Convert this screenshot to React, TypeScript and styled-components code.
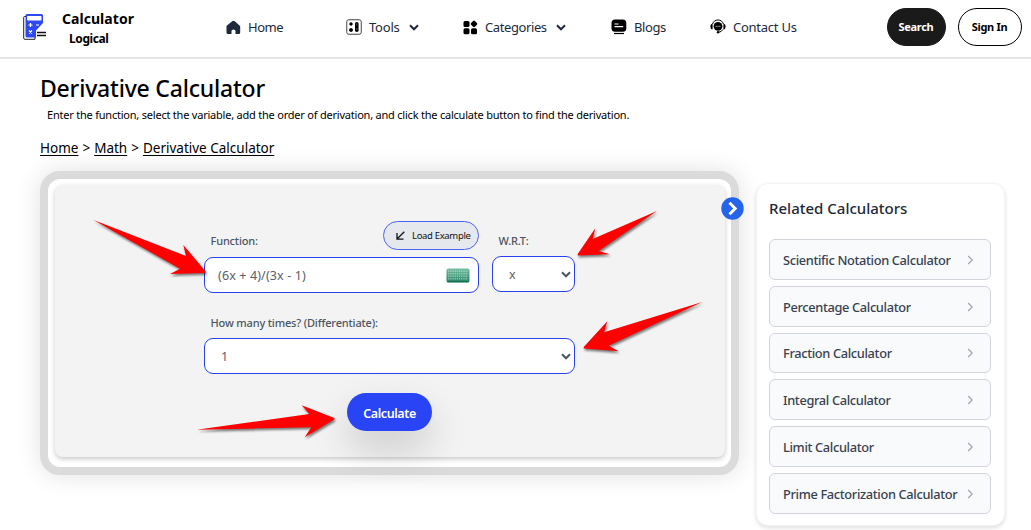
import React from "react";
import styled, { createGlobalStyle } from "styled-components";

const GlobalStyle = createGlobalStyle`
  *, *::before, *::after { box-sizing: border-box; }
  body {
    margin: 0;
    background: #fff;
    color: #000;
    font-family: "Noto Sans", "Open Sans", sans-serif;
    overflow: hidden;
  }
  svg { display: block; flex: none; }
  button, select { font-family: inherit; }
`;

const Page = styled.div`
  position: relative;
  width: 1031px;
  height: 530px;
  overflow: hidden;
`;

const Header = styled.header`
  display: flex;
  align-items: flex-start;
  height: 59px;
  padding-left: 23px;
  border-bottom: 2px solid #e5e5e5;
`;

const Brand = styled.div`
  display: flex;
  width: 203px;
  padding-top: 10px;
  gap: 15px;
`;

const BrandText = styled.div`
  display: flex;
  flex-direction: column;
  font-weight: 700;
`;

const BrandName = styled.span`
  font-size: 14px;
  line-height: 18px;
  letter-spacing: 0.05px;
`;

const BrandSub = styled.span`
  margin-left: 7px;
  font-size: 12px;
  line-height: 21px;
  letter-spacing: -0.4px;
`;

const Nav = styled.nav`
  display: flex;
  align-items: center;
  height: 54px;
`;

const NavItem = styled.a<{ $width: number; $spacing?: number }>`
  display: flex;
  align-items: center;
  width: ${(p) => p.$width}px;
  font-size: 13px;
  line-height: 20px;
  letter-spacing: ${(p) => p.$spacing ?? 0}px;
  color: #1e293b;
  white-space: nowrap;
`;

const NavLabel = styled.span`
  margin-left: 7px;
  margin-right: 9px;
`;

const HeaderActions = styled.div`
  display: flex;
  gap: 12px;
  padding-top: 8px;
`;

const PillButton = styled.button<{ $dark?: boolean; $width: number }>`
  width: ${(p) => p.$width}px;
  height: 38px;
  padding: 0 1px 1px 0;
  border: 1px solid ${(p) => (p.$dark ? "#1a1a1a" : "#000")};
  border-radius: 19px;
  background: ${(p) => (p.$dark ? "#1a1a1a" : "#fff")};
  color: ${(p) => (p.$dark ? "#fff" : "#000")};
  font-size: 11px;
  font-weight: 700;
  letter-spacing: -0.3px;
`;

const Main = styled.main`
  display: flex;
  align-items: flex-start;
  gap: 17px;
  padding: 15px 0 0 40px;
`;

const Content = styled.section`
  width: 699px;
`;

const Title = styled.h1`
  margin: 0;
  font-size: 23px;
  line-height: 28px;
  font-weight: 500;
  letter-spacing: -0.2px;
  white-space: nowrap;
`;

const Intro = styled.p`
  margin: 5px 0 0 7px;
  font-size: 11px;
  line-height: 16px;
  letter-spacing: -0.216px;
  white-space: nowrap;
`;

const Breadcrumb = styled.div`
  display: flex;
  gap: 4px;
  margin-top: 15px;
  font-size: 13.5px;
  line-height: 20px;
  white-space: nowrap;
`;

const Crumb = styled.a`
  text-decoration: underline;
  text-underline-offset: 2px;
`;

const Frame = styled.div`
  position: relative;
  height: 304px;
  margin-top: 13px;
  padding: 6px 6px 10px 7px;
  border: 8px solid #dbdbdb;
  border-radius: 20px;
  background: #fff;
  box-shadow: 0 0 24px rgba(0, 0, 0, 0.12);
`;

const Panel = styled.form`
  display: flex;
  flex-direction: column;
  width: 670px;
  height: 272px;
  padding: 36px 0 0 149px;
  border-radius: 8px;
  background: #f3f3f3;
  box-shadow: 0 2px 5px rgba(0, 0, 0, 0.22);
`;

const FieldRow = styled.div`
  display: flex;
  gap: 13px;
`;

const Field = styled.div<{ $width: number }>`
  display: flex;
  flex-direction: column;
  width: ${(p) => p.$width}px;
`;

const LabelRow = styled.div<{ $height: number }>`
  display: flex;
  justify-content: space-between;
  height: ${(p) => p.$height}px;
  padding-left: 6.5px;
`;

const Label = styled.label<{ $top: number }>`
  margin-top: ${(p) => p.$top}px;
  font-size: 11px;
  line-height: 16px;
  font-weight: 500;
  letter-spacing: -0.16px;
  color: #4b5563;
  white-space: nowrap;
`;

const LoadButton = styled.button`
  display: flex;
  align-items: center;
  gap: 7px;
  width: 96px;
  height: 29px;
  padding: 0 0 0 12px;
  border: 1px solid #4a63f5;
  border-radius: 15px;
  background: #e5e9ee;
  color: #111;
  font-size: 9.5px;
  letter-spacing: -0.33px;
  white-space: nowrap;
`;

const Control = styled.div<{ $indent: number; $end: number }>`
  display: flex;
  align-items: center;
  justify-content: space-between;
  height: 36px;
  padding: 1px ${(p) => p.$end}px 0 ${(p) => p.$indent}px;
  border: 1px solid #2740f0;
  border-radius: 9px;
  background: #fff;
  color: #5b6068;
  font-size: 12.5px;
  line-height: 18px;
  letter-spacing: 0.13px;

  svg { margin-top: -1px; }
`;

const CalculateButton = styled.button`
  width: 85px;
  height: 38px;
  margin: 19px 0 0 143px;
  padding: 2px 0 0;
  border: 0;
  border-radius: 19px;
  background: #2944f5;
  color: #fff;
  font-size: 12.5px;
  font-weight: 600;
  letter-spacing: -0.4px;
  box-shadow: 0 18px 38px rgba(0, 0, 0, 0.17);
`;

const NextBadge = styled.span`
  position: absolute;
  top: 18px;
  right: -13px;
`;

const Sidebar = styled.aside`
  display: flex;
  flex-direction: column;
  width: 249px;
  height: 343px;
  margin-top: 109px;
  padding: 14px 13px 0 12px;
  border: 1px solid #f3f4f6;
  border-radius: 12px;
  background: #fff;
  box-shadow: 0 2px 4px rgba(0, 0, 0, 0.13);
`;

const SidebarTitle = styled.h2`
  margin: 0 0 20px;
  font-size: 15px;
  line-height: 21px;
  font-weight: 500;
  color: #1f2937;
`;

const LinkList = styled.div`
  display: flex;
  flex-direction: column;
  gap: 6px;
`;

const LinkCard = styled.a`
  display: flex;
  align-items: center;
  justify-content: space-between;
  height: 40.8px;
  padding: 1px 16px 0 13px;
  border: 1px solid #d1d5db;
  border-radius: 6px;
  background: #f9fafb;
  color: #374151;
  font-size: 12.8px;
  line-height: 20px;
  font-weight: 500;
  letter-spacing: -0.34px;
  white-space: nowrap;
`;

const Annotations = styled.svg`
  position: absolute;
  top: 0;
  left: 0;
  pointer-events: none;
  filter: drop-shadow(1px 2px 1px rgba(0, 0, 0, 0.5));
`;

const LogoIcon = () => (
  <svg width="24" height="32" viewBox="0 0 24 32">
    <path d="M3 6.500H1.500Q.7 6.500.7 7.500V28Q.7 29.300 2 29.300H12V27" fill="none" stroke="#222" strokeWidth="1" />
    <path d="M2.500 5.500Q2.500 4 4 4H18.500Q20 4 20 5.500V13L13 20.500V27.500H4Q2.500 27.500 2.500 26Z" fill="#2f49f2" />
    <rect x="4" y="6" width="14.500" height="4.500" rx=".8" fill="#fff" />
    <path d="M5.500 15h4M7.500 13v4M13 15h3M6 20.500l3 3m0-3l-3 3" stroke="#fff" strokeWidth="1.200" />
    <path d="M14 22.500h9M14 25.500h9" stroke="#111" strokeWidth="1.300" />
  </svg>
);

const HomeIcon = () => (
  <svg width="15" height="15" viewBox="0 0 15 15">
    <path d="M1 5.500L6.200 1.300Q7.500.4 8.800 1.300L13.500 5.500Q14.200 6 14.200 6.800V12.500Q14.200 14 12.700 14H9.500V11Q9.500 9.500 7.500 9.500T5.500 11V14H2Q.5 14 .5 12.500V6.800Q.5 6 1 5.500Z" fill="#1e293b" />
  </svg>
);

const ToolsIcon = () => (
  <svg width="16" height="16" viewBox="0 0 16 16">
    <rect x=".75" y=".75" width="14.500" height="14.500" rx="2" fill="#fff" stroke="#444" />
    <circle cx="5" cy="5" r="1.700" />
    <circle cx="5" cy="11" r="1.700" />
    <rect x="3.400" y="9.500" width="3.200" height="3" rx=".8" />
    <rect x="9" y="3" width="3.600" height="10" rx="1.700" />
    <path d="M10.800 4.500v2M10.800 9v2" stroke="#777" strokeWidth=".7" />
  </svg>
);

const CategoriesIcon = () => (
  <svg width="15" height="15" viewBox="0 0 15 15">
    <rect x=".5" y="1" width="6" height="6" rx="1.600" />
    <rect x="8.300" y="1.200" width="5.400" height="5.400" rx="1.300" transform="rotate(45 11 3.900)" />
    <rect x=".5" y="8.300" width="6" height="6" rx="1.600" />
    <rect x="8" y="8.300" width="6" height="6" rx="1.600" />
  </svg>
);

const BlogsIcon = () => (
  <svg width="16" height="16" viewBox="0 0 16 16">
    <rect x=".5" y=".5" width="14.800" height="12.300" rx="3.500" />
    <path d="M3.500 5h4M3.500 7.700h8.700" stroke="#fff" strokeWidth="1.200" />
    <path d="M3 14.500h10" stroke="#000" strokeWidth="1.200" />
  </svg>
);

const ContactIcon = () => (
  <svg width="16" height="16" viewBox="0 0 16 16">
    <path d="M2.600 5C4-.4 12-.4 13.400 5" fill="none" stroke="#000" strokeWidth="1" />
    <path d="M2.600 4.500Q.3 5 .3 7.500T2.600 10.500ZM13.400 4.500Q15.700 5 15.700 7.500T13.400 10.500Z" />
    <circle cx="8" cy="7.300" r="4.400" />
    <path d="M13 10.500Q11.500 13 8.500 13.300" fill="none" stroke="#000" strokeWidth="1" />
    <circle cx="8" cy="13.300" r="1.200" />
    <path d="M5.700 7.300h1M7.500 7.300h1M9.300 7.300h1" stroke="#fff" strokeWidth=".9" />
  </svg>
);

const ChevronDown = ({ color = "#1e293b" }: { color?: string }) => (
  <svg width="10" height="7" viewBox="0 0 10 7">
    <path d="M1 1.300l4 4 4-4" fill="none" stroke={color} strokeWidth="2" />
  </svg>
);

const ChevronRight = () => (
  <svg width="7" height="10" viewBox="0 0 7 10">
    <path d="M1.200 1l4 4-4 4" fill="none" stroke="#9ca3af" strokeWidth="1.100" />
  </svg>
);

const LoadIcon = () => (
  <svg width="9" height="9" viewBox="0 0 9 9">
    <path d="M8.300.7L1 8M1 2v6.200h6.500" fill="none" stroke="#111" strokeWidth="1.300" />
  </svg>
);

const KeyboardIcon = () => (
  <svg width="24" height="15" viewBox="0 0 24 15">
    <defs>
      <linearGradient id="keys" x2="0" y2="1">
        <stop stopColor="#75bea0" />
        <stop offset="1" stopColor="#218363" />
      </linearGradient>
    </defs>
    <rect x=".5" y=".5" width="23" height="14" rx="2" fill="url(#keys)" />
    <path d="M2 3.200h20M2 5.700h20M2 8.200h20M2 10.700h20" stroke="#b9e2d0" strokeWidth="1.500" strokeDasharray="1.300 .9" opacity=".65" />
    <path d="M1 13.700h22" stroke="#176b4e" strokeWidth="1" />
  </svg>
);

const NextIcon = () => (
  <svg width="23" height="23" viewBox="0 0 23 23">
    <circle cx="11.500" cy="11.500" r="11.200" fill="#2563eb" />
    <path d="M8.500 5.800l5.700 5.700-5.700 5.700" fill="none" stroke="#fff" strokeWidth="2.900" />
  </svg>
);

const related = [
  "Scientific Notation Calculator",
  "Percentage Calculator",
  "Fraction Calculator",
  "Integral Calculator",
  "Limit Calculator",
  "Prime Factorization Calculator",
];

export default function App() {
  return (
    <>
      <GlobalStyle />
      <Page>
        <Header>
          <Brand>
            <LogoIcon />
            <BrandText>
              <BrandName>Calculator</BrandName>
              <BrandSub>Logical</BrandSub>
            </BrandText>
          </Brand>
          <Nav>
            <NavItem $width={120} $spacing={-0.45}><HomeIcon /><NavLabel>Home</NavLabel></NavItem>
            <NavItem $width={117} $spacing={-0.2}><ToolsIcon /><NavLabel>Tools</NavLabel><ChevronDown /></NavItem>
            <NavItem $width={148} $spacing={-0.4}><CategoriesIcon /><NavLabel>Categories</NavLabel><ChevronDown /></NavItem>
            <NavItem $width={99} $spacing={-0.4}><BlogsIcon /><NavLabel>Blogs</NavLabel></NavItem>
            <NavItem $width={177} $spacing={-0.25}><ContactIcon /><NavLabel>Contact Us</NavLabel></NavItem>
          </Nav>
          <HeaderActions>
            <PillButton $dark $width={59}>Search</PillButton>
            <PillButton $width={64}>Sign In</PillButton>
          </HeaderActions>
        </Header>
        <Main>
          <Content>
            <Title>Derivative Calculator</Title>
            <Intro>
              Enter the function, select the variable, add the order of derivation, and click the calculate button to find the derivation.
            </Intro>
            <Breadcrumb>
              <Crumb>Home</Crumb>
              <span>&gt;</span>
              <Crumb>Math</Crumb>
              <span>&gt;</span>
              <Crumb>Derivative Calculator</Crumb>
            </Breadcrumb>
            <Frame>
              <Panel>
                <FieldRow>
                  <Field $width={275}>
                    <LabelRow $height={36}>
                      <Label $top={12}>Function:</Label>
                      <LoadButton type="button"><LoadIcon />Load Example</LoadButton>
                    </LabelRow>
                    <Control $indent={13} $end={8}>(6x + 4)/(3x - 1)<KeyboardIcon /></Control>
                  </Field>
                  <Field $width={83}>
                    <LabelRow $height={35}><Label $top={12}>W.R.T:</Label></LabelRow>
                    <Control $indent={16} $end={3}>x<ChevronDown color="#4b5563" /></Control>
                  </Field>
                </FieldRow>
                <Field $width={371}>
                  <LabelRow $height={45}><Label $top={22}>How many times? (Differentiate):</Label></LabelRow>
                  <Control $indent={16} $end={3}>1<ChevronDown color="#4b5563" /></Control>
                </Field>
                <CalculateButton type="button">Calculate</CalculateButton>
              </Panel>
              <NextBadge><NextIcon /></NextBadge>
            </Frame>
          </Content>
          <Sidebar>
            <SidebarTitle>Related Calculators</SidebarTitle>
            <LinkList>
              {related.map((name) => (
                <LinkCard key={name}>{name}<ChevronRight /></LinkCard>
              ))}
            </LinkList>
          </Sidebar>
        </Main>
        <Annotations width="1031" height="530" viewBox="0 0 1031 530" fill="#fe0000">
          <path d="M93.500 220L186 256L183.300 245L205.700 271.500V273L170 274L180 268.700Z" />
          <path d="M657 211L598.700 251L610 254.300L577.700 255.500V254L595.300 228.300L592.700 239Z" />
          <path d="M702.300 302L608.700 345.700L618.700 351.300L583.700 348.500V347L607.300 321.300L604 332.300Z" />
          <path d="M196.500 429.700L309.300 414L301.700 405.300L334.300 418V419.500L304.700 437.300L311.300 427.300Z" />
        </Annotations>
      </Page>
    </>
  );
}
